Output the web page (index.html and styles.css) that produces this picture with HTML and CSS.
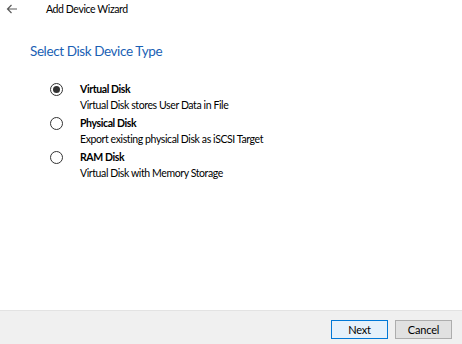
FILE: index.html
```html
<!DOCTYPE html>
<html lang="en">
<head>
    <meta charset="UTF-8">
    <title>Add Device Wizard</title>
    <link rel="stylesheet" href="styles.css">
</head>
<body>
    <div class="wizard">
        <div class="titlebar">
            <svg class="back" width="12" height="10" viewBox="0 0 12 10">
                <path d="M11 5H1.5M5.5 1L1.5 5l4 4" fill="none" stroke="#5a5a5a" stroke-width="1.2"/>
            </svg>
            <span class="title">Add Device Wizard</span>
        </div>
        <div class="content">
            <h1>Select Disk Device Type</h1>
            <div class="options">
                <label class="option">
                    <span class="radio checked"></span>
                    <span class="text">
                        <span class="name">Virtual Disk</span>
                        <span class="desc">Virtual Disk stores User Data in File</span>
                    </span>
                </label>
                <label class="option">
                    <span class="radio"></span>
                    <span class="text">
                        <span class="name">Physical Disk</span>
                        <span class="desc">Export existing physical Disk as iSCSI Target</span>
                    </span>
                </label>
                <label class="option">
                    <span class="radio"></span>
                    <span class="text">
                        <span class="name">RAM Disk</span>
                        <span class="desc">Virtual Disk with Memory Storage</span>
                    </span>
                </label>
            </div>
        </div>
        <div class="footer">
            <button class="btn primary">Next</button>
            <button class="btn">Cancel</button>
        </div>
    </div>
</body>
</html>
```

FILE: styles.css
```css
body {
    margin: 0;
    font-family: Lato, sans-serif;
    font-size: 10.5px;
    letter-spacing: -0.4px;
    color: #000;
    background-color: #fff;
}

.wizard {
    width: 462px;
    height: 344px;
    display: flex;
    flex-direction: column;
}

.titlebar {
    height: 18px;
    display: flex;
    align-items: center;
    padding-left: 6px;
}

.back {
    margin-right: 28px;
}

.content {
    flex: 1;
    padding-left: 30px;
}

h1 {
    margin: 25px 0 0 0;
    font-size: 13.5px;
    letter-spacing: -0.4px;
    font-weight: normal;
    color: #1a5fb4;
}

.options {
    margin-top: 23px;
    padding-left: 20px;
    display: flex;
    flex-direction: column;
    gap: 3px;
}

.option {
    display: flex;
    align-items: flex-start;
}

.radio {
    width: 11px;
    height: 11px;
    border: 1px solid #333;
    border-radius: 50%;
    margin-top: 1px;
    margin-right: 17px;
    display: flex;
    justify-content: center;
    align-items: center;
}

.radio.checked::after {
    content: "";
    width: 7px;
    height: 7px;
    border-radius: 50%;
    background-color: #333;
}

.text {
    display: flex;
    flex-direction: column;
}

.name {
    font-weight: bold;
    line-height: 15px;
}

.desc {
    line-height: 16px;
}

.footer {
    height: 34px;
    background-color: #f0f0f0;
    border-top: 1px solid #e3e3e3;
    display: flex;
    justify-content: flex-end;
    align-items: flex-start;
    gap: 7px;
    padding: 9px 10px 0 0;
    box-sizing: border-box;
}

.btn {
    width: 57px;
    height: 19px;
    font-family: Lato, sans-serif;
    font-size: 11px;
    letter-spacing: -0.2px;
    background-color: #e1e1e1;
    border: 1px solid #adadad;
    padding: 0;
}

.btn.primary {
    background-color: #e5f1fb;
    border-color: #0078d7;
}
```
